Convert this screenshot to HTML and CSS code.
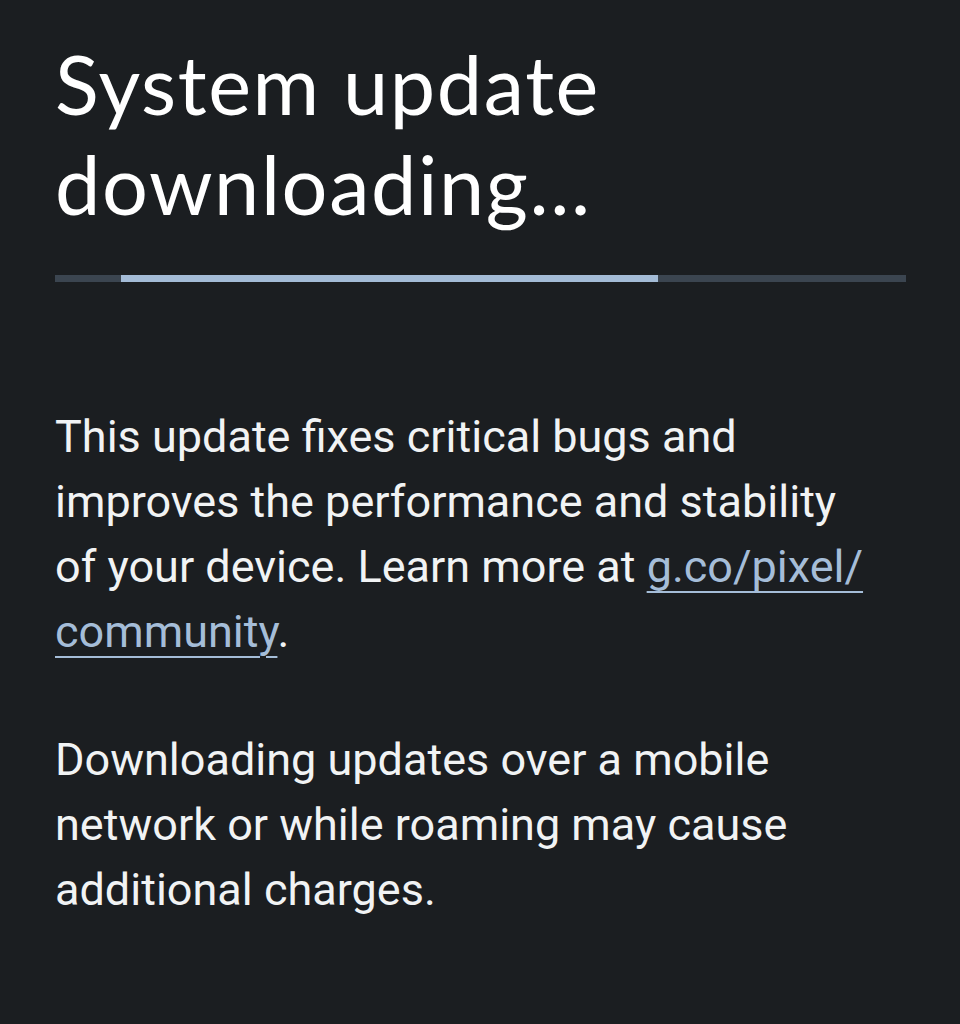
FILE: index.html
```html
<!DOCTYPE html>
<html lang="en">
<head>
    <meta charset="UTF-8">
    <meta name="viewport" content="width=device-width, initial-scale=1.0">
    <title>System update</title>
    <link rel="stylesheet" href="styles.css">
</head>
<body>

    <div class="update-screen">
        <h1 class="title">System update downloading...</h1>

        <div class="progress">
            <div class="progress-fill"></div>
        </div>

        <div class="details">
            <p>This update fixes critical bugs and improves the performance and stability of your device. Learn more at <a href="#">g.co/pixel/<br>community</a>.</p>
            <p>Downloading updates over a mobile network or while roaming may cause additional charges.</p>
        </div>
    </div>

</body>
</html>
```

FILE: styles.css
```css
* {
    box-sizing: border-box;
    margin: 0;
    padding: 0;
}
body {
    background-color: #1b1e21;
    color: #f1f3f4;
    font-family: Roboto, "Noto Sans", sans-serif;
}
.update-screen {
    padding: 34px 54px 0 55px;
    width: 960px;
}
.title {
    font-family: Lato, "Open Sans", sans-serif;
    font-weight: 400;
    font-size: 81px;
    line-height: 100px;
    letter-spacing: 1.6px;
    color: #ffffff;
    width: 640px;
}
.progress {
    margin-top: 41px;
    height: 7px;
    background-color: #3b4550;
    width: 851px;
    display: flex;
}
.progress-fill {
    margin-left: 66px;
    width: 537px;
    background-color: #a3bbd6;
}
.details {
    margin-top: 122px;
    width: 830px;
}
.details p {
    font-size: 45px;
    line-height: 65px;
    margin-bottom: 63px;
}
.details a {
    color: #a5bdd8;
    text-decoration: underline;
    text-decoration-thickness: 2px;
    text-underline-offset: 9px;
}
```
